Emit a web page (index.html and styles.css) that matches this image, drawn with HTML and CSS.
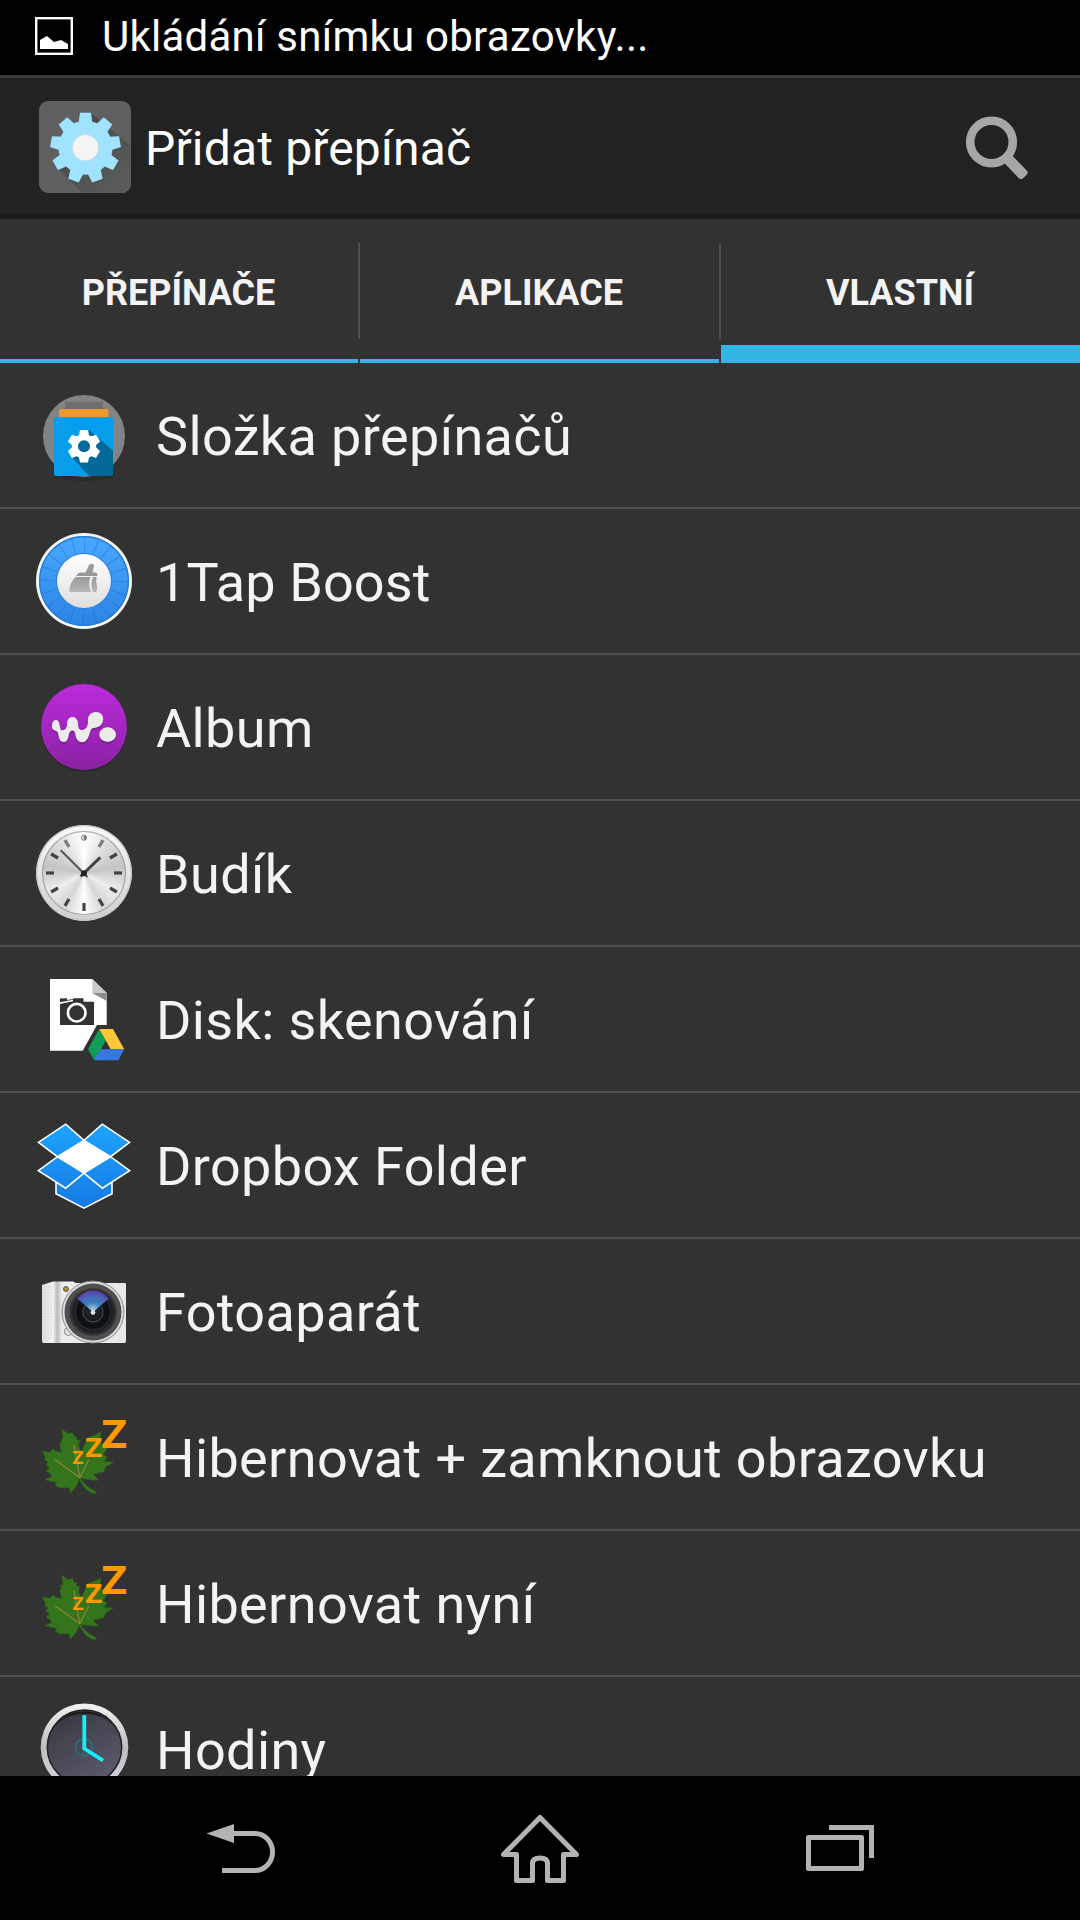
FILE: index.html
```html
<!DOCTYPE html>
<html lang="cs">
<head>
  <meta charset="UTF-8" />
  <meta name="viewport" content="width=device-width, initial-scale=1.0"/>
  <title>Přidat přepínač</title>
  <link rel="stylesheet" href="styles.css">
</head>
<body>

  <!-- STATUS BAR -->
  <div class="status-bar">
    <svg class="status-icon" viewBox="0 0 38 38">
      <rect x="1.2" y="1.2" width="35.6" height="35.6" fill="none" stroke="#fff" stroke-width="2.4"/>
      <path d="M5 32v-9l7-4 7 6 7-2 7 4v5z" fill="#fff"/>
    </svg>
    <span class="status-text">Ukládání snímku obrazovky...</span>
  </div>

  <!-- ACTION BAR -->
  <header class="action-bar">
    <svg class="app-icon" viewBox="0 0 92 92">
      <defs>
        <clipPath id="appClip"><rect width="92" height="92" rx="9"/></clipPath>
        <linearGradient id="appShadow" x1="0" y1="0" x2="1" y2="1">
          <stop offset="0" stop-color="#404040"/><stop offset="1" stop-color="#5d5f5f"/>
        </linearGradient>
        <path id="tooth" d="M-7 -24L-5.5 -35H5.5L7 -24z"/>
      </defs>
      <g clip-path="url(#appClip)">
        <rect width="92" height="92" fill="#606060"/>
        <path d="M52 12L92 45V92H43L14 62z" fill="url(#appShadow)"/>
      </g>
      <g transform="translate(46.5 46.7)" fill="#9fe3ff">
        <circle r="27"/>
        <use href="#tooth"/>
        <use href="#tooth" transform="rotate(40)"/>
        <use href="#tooth" transform="rotate(80)"/>
        <use href="#tooth" transform="rotate(120)"/>
        <use href="#tooth" transform="rotate(160)"/>
        <use href="#tooth" transform="rotate(200)"/>
        <use href="#tooth" transform="rotate(240)"/>
        <use href="#tooth" transform="rotate(280)"/>
        <use href="#tooth" transform="rotate(320)"/>
        <circle r="13.3" fill="#f4f4f4" stroke="#b9d5e0" stroke-width=".8"/>
      </g>
    </svg>
    <h1 class="title">Přidat přepínač</h1>
    <svg class="search-icon" viewBox="0 0 66 66">
      <circle cx="27.5" cy="28" r="21.3" fill="none" stroke="#a6a6a6" stroke-width="8.6"/>
      <rect x="20" y="-5.5" width="28" height="11" rx="3" transform="translate(27.5 28) rotate(46)" fill="#a6a6a6"/>
    </svg>
  </header>

  <!-- TABS -->
  <nav class="tabs">
    <div class="tab first"><span>PŘEPÍNAČE</span></div>
    <div class="tab-divider"></div>
    <div class="tab"><span>APLIKACE</span></div>
    <div class="tab-divider"></div>
    <div class="tab active"><span>VLASTNÍ</span></div>
  </nav>

  <!-- LIST -->
  <ul class="list">
    <li class="row">
      <svg class="icon" viewBox="0 0 96 96">
        <defs><path id="cog" d="M-5.2 -10L-4 -16.3H4L5.2 -10z"/></defs>
        <ellipse cx="48" cy="88" rx="31" ry="6" fill="#2b2b2b"/>
        <circle cx="48" cy="49" r="41" fill="#838383"/>
        <rect x="29" y="15" width="38" height="8" fill="#6f6f6f"/>
        <rect x="23" y="22" width="49.5" height="12" rx="2" fill="#ee992a"/>
        <rect x="18" y="30" width="59" height="59" rx="2" fill="#069dea"/>
        <path d="M53 43L77 63.7V87q0 2-2 2H53L35.7 70z" fill="#046898"/>
        <g transform="translate(48 59.3)" fill="#fff">
          <circle r="12.2"/>
          <use href="#cog"/>
          <use href="#cog" transform="rotate(60)"/>
          <use href="#cog" transform="rotate(120)"/>
          <use href="#cog" transform="rotate(180)"/>
          <use href="#cog" transform="rotate(240)"/>
          <use href="#cog" transform="rotate(300)"/>
          <circle r="6" fill="#046898"/>
        </g>
      </svg>
      <span class="label">Složka přepínačů</span>
    </li>
    <li class="row">
      <svg class="icon" viewBox="0 0 96 96">
        <defs>
          <linearGradient id="blueRing" x1="0" y1="0" x2="0" y2="1">
            <stop offset="0" stop-color="#48a9ff"/><stop offset="1" stop-color="#2c84e4"/>
          </linearGradient>
          <linearGradient id="whiteBtn" x1="0" y1="0" x2="0" y2="1">
            <stop offset="0" stop-color="#fff"/><stop offset="1" stop-color="#dedede"/>
          </linearGradient>
          <linearGradient id="broom" x1="0" y1="0" x2="0" y2="1">
            <stop offset="0" stop-color="#999"/><stop offset="1" stop-color="#b8b8b8"/>
          </linearGradient>
        </defs>
        <circle cx="48" cy="48" r="48" fill="#f5f5f5"/>
        <circle cx="48" cy="48" r="45" fill="url(#blueRing)"/>
        <circle cx="48" cy="48" r="36" fill="none" stroke="#1f72cf" stroke-opacity=".5" stroke-width="16" stroke-dasharray="1 10.31"/>
        <circle cx="48" cy="48" r="44.4" fill="none" stroke="#2379d3" stroke-width="1.2"/>
        <circle cx="48" cy="48" r="28" fill="#2b80dc"/>
        <circle cx="48" cy="48" r="27" fill="url(#whiteBtn)"/>
        <path d="M52.5 33q.5-2 3-2.3 2.7 0 2.5 2.5l-1.5 6.3H59.5q1.8 0 1.8 1.5v2H40.500q1-3.5 4.5-3.5h4.5z" fill="#999"/>
        <path d="M39.500 44H54.5Q51.5 51 55 59H33.3q0-9 6.2-15zM57 44H60.500q-1 5 .5 9 .5 4-1 6H57Q54 52 57 44z" fill="url(#broom)"/>
      </svg>
      <span class="label tight">1Tap Boost</span>
    </li>
    <li class="row">
      <svg class="icon" viewBox="0 0 96 96">
        <defs>
          <linearGradient id="purple" x1="0" y1="0" x2="0" y2="1">
            <stop offset="0" stop-color="#bc2bdc"/><stop offset="1" stop-color="#8a22a2"/>
          </linearGradient>
          <path id="walk" d="M20 41C24 41 23 47 25 51C29 52 31 49 31 45C31 36 41 36 42 44C42 49 43 51 46 51C50 51 52 47 52 43C51 37 55 33 60 33C65 33 68 37 67 42C66 47 61 49 57 49C53 50 54 61 48 63C41 64 40 59 39 54C38 50 34 51 33 55C32 60 31 63 28 63C23 63 23 58 22 54C21 51 16 52 16 48C16 44 17 41 20 41zM71.700 48.200A8.300 7.300 0 1 1 71.600 48.200z"/>
        </defs>
        <circle cx="48" cy="49" r="43.5" fill="#292929"/>
        <circle cx="48" cy="48" r="43" fill="url(#purple)"/>
        <use href="#walk" y="2" fill="#7d1d94"/>
        <use href="#walk" fill="#ececec"/>
      </svg>
      <span class="label">Album</span>
    </li>
    <li class="row">
      <svg class="icon" viewBox="0 0 96 96">
        <defs>
          <linearGradient id="rim" x1="0" y1="0" x2="0" y2="1">
            <stop offset="0" stop-color="#fafafa"/><stop offset="1" stop-color="#cfcfcf"/>
          </linearGradient>
          <path id="tick" d="M0 -38V-30"/>
        </defs>
        <circle cx="48" cy="48" r="48" fill="url(#rim)"/>
        <circle cx="48" cy="48" r="47.3" fill="none" stroke="#c4c4c4" stroke-width="1"/>
        <foreignObject x="6" y="6" width="84" height="84"><div class="clock-face"></div></foreignObject>
        <circle cx="48" cy="48" r="41.5" fill="none" stroke="#a5a5a5" stroke-width="1.2"/>
        <g transform="translate(48 48)" stroke="#444" stroke-width="3.2">
          <use href="#tick" transform="rotate(30)" opacity=".65"/>
          <use href="#tick" transform="rotate(60)"/>
          <use href="#tick" transform="rotate(90)"/>
          <use href="#tick" transform="rotate(120)"/>
          <use href="#tick" transform="rotate(150)"/>
          <use href="#tick" transform="rotate(180)"/>
          <use href="#tick" transform="rotate(210)"/>
          <use href="#tick" transform="rotate(240)"/>
          <use href="#tick" transform="rotate(270)"/>
          <use href="#tick" transform="rotate(300)"/>
          <use href="#tick" transform="rotate(330)" opacity=".65"/>
        </g>
        <circle cx="48" cy="12.7" r="2.6" fill="#ddd" stroke="#888"/>
        <path d="M48 10.2a2.5 2.5 0 0 1 0 5z" fill="#777"/>
        <path d="M51.5 52L24.7 25.3" stroke="#555" stroke-width="2"/>
        <path d="M44.5 51.5L64.3 32.3" stroke="#444" stroke-width="3"/>
        <circle cx="48" cy="48.3" r="3" fill="#222"/>
      </svg>
      <span class="label">Budík</span>
    </li>
    <li class="row">
      <svg class="icon" viewBox="0 0 96 96">
        <path d="M14 8H56.3L70.7 22V54H61L46.7 79.7H14z" fill="#fff"/>
        <path d="M56.3 8L70.7 22H56.3z" fill="#c9c9c9"/>
        <path d="M56.3 22H70.7V30z" fill="#8c8c8c"/>
        <path d="M24 27.5L31 27.3V29L37.3 28V27.3H47.5V30.7H58V54H24V33L31 31L24 31.5z" fill="#333"/>
        <path d="M24 32L37 29.5" stroke="#fff" stroke-width="1.5"/>
        <circle cx="40.7" cy="41.7" r="8.8" fill="#333" stroke="#fff" stroke-width="2.6"/>
        <path d="M63.3 58L52 78.3L58.3 89.3L70 69.5z" fill="#0f9d58"/>
        <path d="M63.3 58H77L88.3 78.3H74.7z" fill="#fdc738"/>
        <path d="M64.5 78.3H88.3L82.3 89.3H58.3z" fill="#3777e3"/>
      </svg>
      <span class="label">Disk: skenování</span>
    </li>
    <li class="row">
      <svg class="icon" viewBox="0 0 96 96">
        <defs>
          <linearGradient id="dropbox" gradientUnits="userSpaceOnUse" x1="0" y1="6" x2="0" y2="92">
            <stop offset="0" stop-color="#1ea5ff"/><stop offset="1" stop-color="#1579e3"/>
          </linearGradient>
        </defs>
        <g fill="url(#dropbox)" stroke="#fff" stroke-width="1.6">
          <path d="M20 64V76.7L48 91.2L76 76.7V64L48 54z"/>
          <path d="M2.4 25.4L29.7 7.2L48 23.5L21.5 39.7z"/>
          <path d="M93.6 25.4L66.3 7.2L48 23.5L74.5 39.7z"/>
          <path d="M2.4 53.7L21.5 39.7L48 56L29.7 71.2z"/>
          <path d="M93.6 53.7L74.5 39.7L48 56L66.3 71.2z"/>
        </g>
        <path d="M48 23.5L74.5 39.7L48 56L21.5 39.7z" fill="#fff"/>
      </svg>
      <span class="label">Dropbox Folder</span>
    </li>
    <li class="row">
      <svg class="icon" viewBox="0 2 96 96">
        <defs>
          <linearGradient id="camBody" x1="0" y1="0" x2="1" y2="0">
            <stop offset="0" stop-color="#ddd"/><stop offset=".13" stop-color="#f5f5f5"/>
            <stop offset=".18" stop-color="#bbb"/><stop offset=".24" stop-color="#eee"/><stop offset="1" stop-color="#e8e8e8"/>
          </linearGradient>
          <radialGradient id="lens">
            <stop offset="0" stop-color="#2a2e35"/><stop offset=".6" stop-color="#0b0c0f"/>
            <stop offset=".8" stop-color="#1c1d21"/><stop offset="1" stop-color="#3c3c3e"/>
          </radialGradient>
          <radialGradient id="fan" gradientUnits="userSpaceOnUse" cx="57" cy="52" r="24">
            <stop offset="0" stop-color="#cfe4f5"/><stop offset=".4" stop-color="#3c7fb8"/>
            <stop offset=".7" stop-color="#4a62b8"/><stop offset="1" stop-color="#6a2794"/>
          </radialGradient>
        </defs>
        <path d="M6 24L17 20.5H37L40 22H89Q90 22 90 23V80Q90 82 88.5 82H7.5Q6 82 6 80z" fill="url(#camBody)"/>
        <path d="M9 25V79M12 25V79M15 25V79" stroke="#cfcfcf" stroke-dasharray="1.5 1.5"/>
        <circle cx="30" cy="28" r="2.5" fill="#a99440" stroke="#555"/>
        <circle cx="32.3" cy="70.5" r="4" fill="#e2e2e2" stroke="#888"/>
        <circle cx="57" cy="51" r="31" fill="#d9d9d9" stroke="#777" stroke-width=".8"/>
        <circle cx="57" cy="51" r="28.5" fill="#505050"/>
        <circle cx="57" cy="51" r="24" fill="url(#lens)"/>
        <circle cx="57" cy="51" r="18" fill="none" stroke="#2f3540"/>
        <circle cx="57" cy="51" r="10" fill="none" stroke="#4a5260"/>
        <path d="M57 52L41 38.500Q57 22 73 38.500z" transform="translate(0 -1)" fill="url(#fan)"/>
        <circle cx="57" cy="53" r="3.500" fill="#15181c"/>
        <circle cx="57" cy="51.5" r="2.4" fill="#ddd"/>
      </svg>
      <span class="label">Fotoaparát</span>
    </li>
    <li class="row">
      <svg class="icon" viewBox="0 0 96 96">
        <g id="leaf">
          <path transform="scale(.3333) translate(-48 -447)" d="M66 573L88 577L100 567L108 574L124 577L119 552L124 547L122 538L129 536L125 507L142 520L158 518L163 530L170 528L169 540L180 541L176 558L184 575L196 548L204 532L222 526L243 516L240 545L262 565L250 584L262 590L253 604L281 606L256 622L252 635L220 643L236 661L214 660L182 655Q196 681 228 694Q232 700 226 702Q198 700 178 658L168 680L152 699L147 683L120 684L106 677L110 667L92 664L74 659L96 649L88 638L78 634L88 624L78 614L84 606L74 600L76 590z" fill="#34741c" stroke="#2b5a1a" stroke-width="2"/>
          <path d="M43.7 68.7L19 50.7M43.7 68.7L38 36M43.7 68.7L52.7 51" stroke="#8b8237" stroke-width="1.3"/>
          <text class="zzz" x="65.5" y="38.7" font-size="39.5" textLength="25.5" lengthAdjust="spacingAndGlyphs">Z</text>
          <text class="zzz" x="49.3" y="48" font-size="27.5" textLength="17" lengthAdjust="spacingAndGlyphs">Z</text>
          <text class="zzz" x="36.5" y="55" font-size="18" textLength="11" lengthAdjust="spacingAndGlyphs">Z</text>
        </g>
      </svg>
      <span class="label">Hibernovat + zamknout obrazovku</span>
    </li>
    <li class="row">
      <svg class="icon" viewBox="0 0 96 96"><use href="#leaf"/></svg>
      <span class="label">Hibernovat nyní</span>
    </li>
    <li class="row">
      <svg class="icon" viewBox="0 0 96 96">
        <defs>
          <linearGradient id="steel" x1="0" y1="0" x2="0" y2="1">
            <stop offset="0" stop-color="#f2f2f2"/><stop offset=".5" stop-color="#bdbdc2"/><stop offset="1" stop-color="#d8d8e0"/>
          </linearGradient>
          <linearGradient id="dial" x1="0" y1="0" x2=".6" y2="1">
            <stop offset="0" stop-color="#35353c"/><stop offset="1" stop-color="#5b5869"/>
          </linearGradient>
        </defs>
        <circle cx="48.5" cy="46.3" r="43.8" fill="url(#steel)"/>
        <circle cx="48.5" cy="46.3" r="37.2" fill="url(#dial)" stroke="#222" stroke-width="1.5"/>
        <path d="M14 34A37 37 0 0 1 83 34Q74 13 48.5 13T14 34z" fill="#1b1b20"/>
        <circle cx="48" cy="46.3" r="8.5" fill="none" stroke="#167f8c" stroke-width="1.2"/>
        <path d="M48.3 14.3V47.5L67 59.5" fill="none" stroke="#0ff3fb" stroke-width="3.8"/>
      </svg>
      <span class="label">Hodiny</span>
    </li>
  </ul>

  <!-- NAVIGATION BAR -->
  <footer class="nav-bar">
    <svg class="nav-icon" viewBox="0 0 84 84">
      <path d="M8.5 27.5L36 18V37z" fill="#b3b3b3"/>
      <path d="M35 27.5H57C67 27.5 74.5 36 74.5 46S67 64.5 57 64.5H24" fill="none" stroke="#b3b3b3" stroke-width="5"/>
    </svg>
    <svg class="nav-icon" viewBox="0 0 84 84">
      <path d="M42 11.5L5.5 48.5H18.5V74.5H34.5V57Q35 52 42 52T49.5 57V74.5H65.5V48.5H78.5z" fill="none" stroke="#b3b3b3" stroke-width="5" stroke-linejoin="round"/>
    </svg>
    <svg class="nav-icon" viewBox="0 0 84 84">
      <path d="M31 21.5H73.5V52" fill="none" stroke="#b3b3b3" stroke-width="5"/>
      <rect x="10.5" y="31.5" width="53" height="31" fill="none" stroke="#b3b3b3" stroke-width="5" stroke-linejoin="round"/>
    </svg>
  </footer>

</body>
</html>
```
FILE: styles.css
```css
* {
  box-sizing: border-box;
}

body {
  margin: 0;
  padding: 0;
  height: 1920px;
  display: flex;
  flex-direction: column;
  overflow: hidden;
  background: #323232;
  color: #f3f3f3;
  font-family: Roboto, 'Noto Sans', sans-serif;
}

svg {
  display: block;
  flex: none;
}

/* status bar */
.status-bar {
  height: 75px;
  flex: none;
  display: flex;
  align-items: center;
  padding-left: 35px;
  background: #000;
  color: #fff;
}

.status-icon {
  width: 38px;
  height: 38px;
  margin-top: -3px;
}

.status-text {
  margin-left: 29px;
  margin-top: -2px;
  font-size: 42px;
  line-height: 50px;
  letter-spacing: 0.25px;
  white-space: nowrap;
}

/* action bar */
.action-bar {
  height: 144px;
  flex: none;
  display: flex;
  align-items: center;
  padding: 0 50px 0 39px;
  background: #222;
  border-top: 3px solid #3c3c3c;
  border-bottom: 6px solid #1b1b1b;
}

.app-icon {
  width: 92px;
  height: 92px;
  margin-top: 3px;
}

.title {
  margin: 6px 0 0 14px;
  flex: 1;
  font-size: 48px;
  font-weight: 400;
  line-height: 56px;
  letter-spacing: 0.16px;
  color: #fff;
}

.search-icon {
  width: 66px;
  height: 66px;
  margin-top: 2px;
}

/* tabs */
.tabs {
  height: 144px;
  flex: none;
  display: flex;
}

.tab {
  flex: 1;
  display: flex;
  align-items: center;
  justify-content: center;
  padding-right: 1px;
  border-bottom: 4px solid #33b5e5;
  font-size: 36px;
  font-weight: 700;
}

.tab.first {
  flex: 0 0 358px;
}

.tab span {
  margin-top: 8px;
}

.tab.active {
  border-bottom-width: 18px;
}

.tab.active span {
  margin-top: 22px;
}

.tab-divider {
  width: 2px;
  height: 96px;
  margin-top: 24px;
  background: #505050;
}

/* list */
.list {
  flex: 1;
  min-height: 0;
  margin: 0;
  padding: 0;
  list-style: none;
  overflow: hidden;
}

.row {
  height: 146px;
  display: flex;
  align-items: center;
  padding-left: 36px;
  border-bottom: 2px solid #505050;
}

.icon {
  width: 96px;
  height: 96px;
  overflow: visible;
}

.label {
  margin-left: 24px;
  margin-top: 4px;
  font-size: 54px;
  line-height: 64px;
  letter-spacing: 0.37px;
  white-space: nowrap;
}

.label.tight {
  letter-spacing: 0.1px;
}

.clock-face {
  width: 84px;
  height: 84px;
  border-radius: 50%;
  background: conic-gradient(#fff, #ddd 40deg, #c4c4c4 80deg, #eee 120deg, #d5d5d5 150deg, #fff 180deg, #d5d5d5 210deg, #eee 240deg, #c4c4c4 280deg, #ddd 320deg, #fff);
}

.zzz {
  font-family: 'Open Sans', 'Noto Sans', sans-serif;
  font-weight: 700;
  fill: #ff9800;
}

/* navigation bar */
.nav-bar {
  height: 144px;
  flex: none;
  display: flex;
  justify-content: center;
  align-items: center;
  gap: 216px;
  background: #000;
}

.nav-icon {
  width: 84px;
  height: 84px;
}
```
